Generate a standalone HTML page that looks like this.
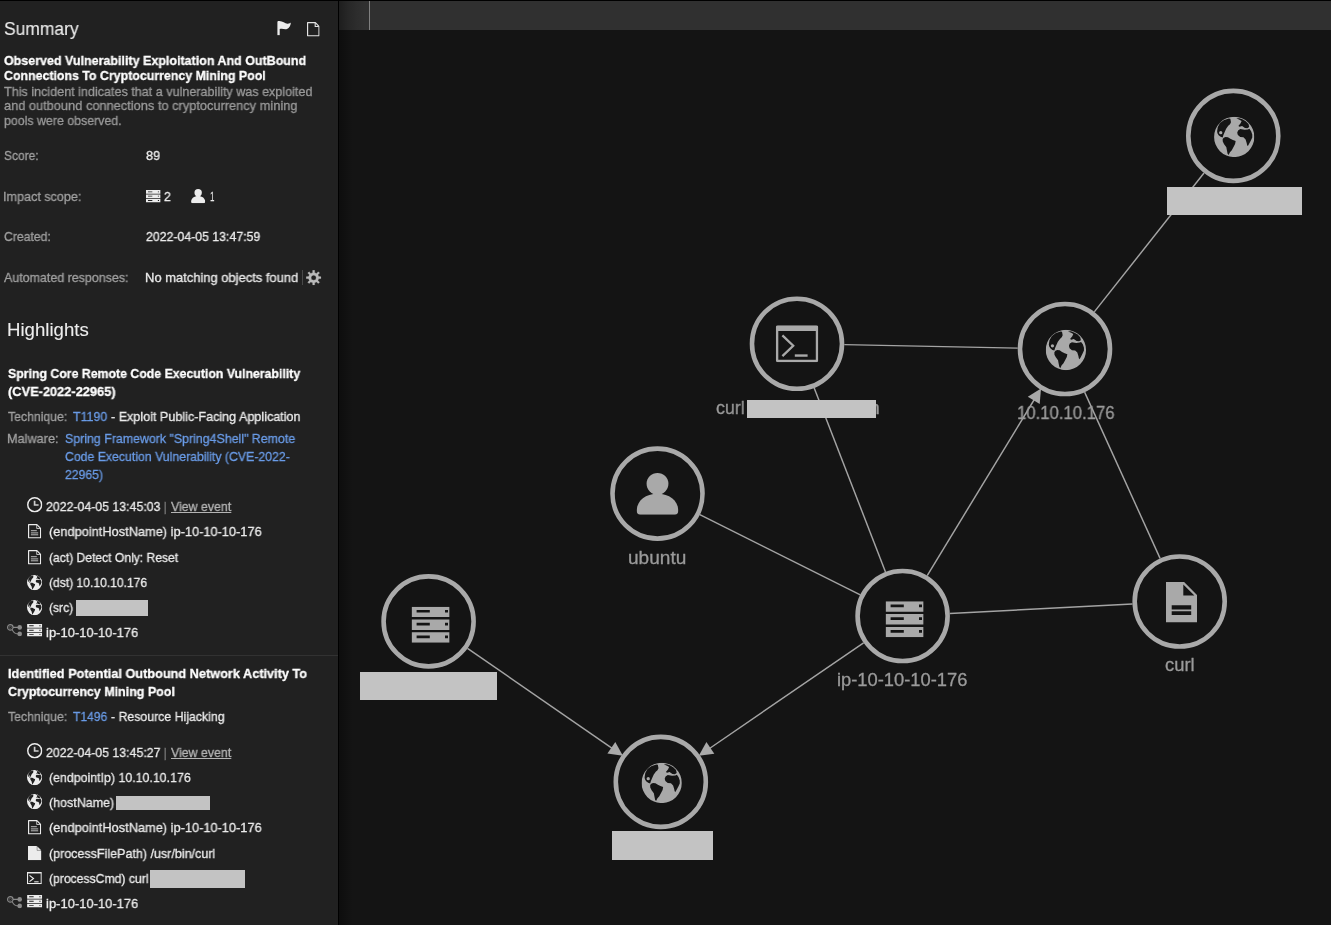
<!DOCTYPE html>
<html lang="en"><head><meta charset="utf-8"><title>Incident summary</title>
<style>
html,body{margin:0;padding:0;background:#141414;}
body{width:1331px;height:925px;position:relative;overflow:hidden;font-family:"Liberation Sans",sans-serif;}
#panel{position:absolute;left:0;top:1px;width:338px;height:924px;background:#212121;}
#edge-line{position:absolute;left:338px;top:0;width:1px;height:925px;background:#000;}
#top-line{position:absolute;left:0;top:0;width:1331px;height:1px;background:#000;}
#topbar{position:absolute;left:339px;top:1px;width:992px;height:29px;background:#303030;}
#topbar-shade{position:absolute;left:339px;top:1px;width:26px;height:29px;background:linear-gradient(90deg,rgba(18,18,18,.62),rgba(18,18,18,.3) 35%,rgba(18,18,18,.1) 70%,rgba(18,18,18,0));}
#tb-sep{position:absolute;left:369px;top:1px;width:1px;height:29px;background:#808080;}
#graph-shade{position:absolute;left:339px;top:30px;width:14px;height:895px;background:linear-gradient(90deg,rgba(0,0,0,.35),rgba(0,0,0,0));}
#hl-sep{position:absolute;left:0;top:655px;width:338px;height:1px;background:#323232;}
#resp-sep{position:absolute;left:302px;top:270px;width:1px;height:15px;background:#484848;}
.t{position:absolute;white-space:nowrap;line-height:1;transform-origin:0 0;display:block;will-change:transform;-webkit-text-stroke:0.3px currentColor;}
.ic{position:absolute;overflow:visible;}
.rd{position:absolute;background:#c3c3c3;}
#g{position:absolute;left:0;top:0;color:#a9a9a9;}
#g line{stroke:#a4a4a4;stroke-width:1.45;}
#g .ar{fill:#a9a9a9;}
#g .nd{fill:#141414;stroke:#a9a9a9;stroke-width:4.6;}
</style></head><body>
<svg width="0" height="0" style="position:absolute"><defs><symbol id="i-globe" viewBox="0 0 100 100"><path fill="currentColor" fill-rule="evenodd" stroke="none" d="M0.00 50.00 A50 50 0 1 0 100.00 50.00 A50 50 0 1 0 0.00 50.00 Z M7.6 36.2 L9.3 25.7 L14.8 15.8 L24.0 8.4 L36.5 4.2 L40.4 5.0 L42.0 13.7 L39.6 18.5 L35.2 22.5 L30.0 29.7 L26.4 37.8 L23.2 45.0 L21.4 51.3 L16.4 49.8 L11.4 45.6 L8.4 41.0 Z M21.4 55.5 L24.0 52.0 L28.5 50.2 L34.5 50.8 L40.5 54.7 L46.9 57.9 L53.6 60.3 L52.2 67.5 L48.0 75.6 L44.0 83.0 L39.5 88.0 L36.0 95.0 L33.6 91.6 L32.0 83.6 L30.5 75.6 L25.0 68.0 L21.6 61.5 Z M55.2 4.0 L63.0 7.4 L68.4 10.6 L65.9 16.1 L60.4 22.9 L63.3 24.8 L69.5 22.7 L76.7 27.9 L82.6 28.3 L87.2 25.6 L85.6 18.2 L78.6 11.2 L70.2 6.3 L62.5 3.7 Z M57.5 39.4 L59.6 34.1 L65.0 30.7 L75.9 32.4 L83.9 31.6 L87.7 29.9 L92.0 35.7 L94.8 44.2 L94.8 51.4 L91.4 58.9 L87.7 66.0 L84.0 72.8 L82.1 70.7 L81.0 65.1 L78.3 56.3 L73.0 51.0 L65.0 50.4 L59.1 45.5 Z"/><circle cx="16.6" cy="39.6" r="4.1" fill="currentColor"/></symbol><symbol id="i-server" viewBox="0 0 38 36"><path fill="currentColor" fill-rule="evenodd" d="M0 0 H38 V10.4 H0 Z M5 3.2 H18.2 V5.9 H5 Z M33.4 3.2 H36.4 V5.9 H33.4 Z M0 12.8 H38 V23.200000000000003 H0 Z M5 16.0 H18.2 V18.700000000000003 H5 Z M33.4 16.0 H36.4 V18.700000000000003 H33.4 Z M0 25.6 H38 V36.0 H0 Z M5 28.8 H18.2 V31.5 H5 Z M33.4 28.8 H36.4 V31.5 H33.4 Z "/></symbol><symbol id="i-server-s" viewBox="0 0 15 12.6"><path fill="currentColor" fill-rule="evenodd" d="M0 0 H15 V3.7 H0 Z M2 1.3 H6.5 V2.2 H2 Z M12.2 1.3 H13.4 V2.2 H12.2 Z M0 4.45 H15 V8.15 H0 Z M2 5.75 H6.5 V6.65 H2 Z M12.2 5.75 H13.4 V6.65 H12.2 Z M0 8.9 H15 V12.600000000000001 H0 Z M2 10.200000000000001 H6.5 V11.100000000000001 H2 Z M12.2 10.200000000000001 H13.4 V11.100000000000001 H12.2 Z "/></symbol><symbol id="i-user" viewBox="0 0 42 42"><circle cx="21" cy="11" r="10.9" fill="currentColor"/><path fill="currentColor" d="M0.2 38 C0.2 28 9 21 21 21 C33 21 41.8 28 41.8 38 C41.8 40.5 40.3 42 38 42 H4 C1.7 42 0.2 40.5 0.2 38 Z"/></symbol><symbol id="i-term" viewBox="0 0 42.5 37"><path fill="currentColor" fill-rule="evenodd" d="M2 0 H40.5 Q42.5 0 42.5 2 V35 Q42.5 37 40.5 37 H2 Q0 37 0 35 V2 Q0 0 2 0 Z M2.5 5.8 H40 V34.5 H2.5 Z"/><path fill="none" stroke="currentColor" stroke-width="2.3" d="M6.6 10.2 L17.4 20.5 L6.6 30.8"/><rect x="19" y="29.1" width="12.8" height="2.4" fill="currentColor"/></symbol><symbol id="i-file2" viewBox="0 0 31 40.7"><path fill="currentColor" fill-rule="evenodd" d="M0 0 H18 L31 13 V40.7 H0 Z M17.3 2.6 V13.6 H28.4 Z M5.7 23.4 H25.2 V27.6 H5.7 Z M5.7 29.4 H25.2 V33.2 H5.7 Z"/></symbol><symbol id="i-file-solid" viewBox="0 0 13.4 14.2"><path fill="currentColor" d="M0 0 H8.6 L13.4 4.8 V14.2 H0 Z"/><path fill="currentColor" opacity="0.55" d="M9.3 0.3 L13.1 4.1 H9.3 Z"/><path fill="none" stroke="#212121" stroke-width="0.7" opacity="0.55" d="M9.1 0.2 V4.4 H13.2"/></symbol><symbol id="i-file-o" viewBox="0 0 12.6 14.4"><path fill="none" stroke="currentColor" stroke-width="1.15" stroke-linejoin="round" d="M0.6 0.6 H8.4 L12.0 4.3 V13.8 H0.6 Z"/><path fill="none" stroke="currentColor" stroke-width="1.1" d="M8.2 0.9 V4.5 H11.8"/></symbol><symbol id="i-file-l" viewBox="0 0 13.2 14.4"><path fill="none" stroke="currentColor" stroke-width="1.15" stroke-linejoin="round" d="M0.6 0.6 H8.9 L12.6 4.3 V13.8 H0.6 Z"/><path fill="none" stroke="currentColor" stroke-width="1" d="M8.7 0.9 V4.5 H12.3" opacity="0.75"/><path fill="none" stroke="currentColor" stroke-width="0.85" d="M2.9 6.7 H8.8 M2.9 8.9 H10.2 M2.9 10.8 H10.2" opacity="0.9"/></symbol><symbol id="i-flag" viewBox="0 0 14 14.4"><path fill="currentColor" d="M0.4 0.9 C0.4 0.4 0.8 0.15 1.4 0.1 C5.2 -0.5 7.8 2.5 10.4 2.7 C12.1 2.8 13.1 2.2 13.9 1.5 C13.6 4.6 12.4 7.2 10 8 C7.6 8.7 5.6 7.3 2.7 8.1 V14.3 H0.4 Z"/></symbol><symbol id="i-gear" viewBox="0 0 100 100"><path fill="currentColor" fill-rule="evenodd" stroke="currentColor" stroke-width="2.2" stroke-linejoin="round" d="M43.3 17.2 L44.0 1.4 L56.0 1.4 L56.7 17.2 L68.5 22.1 L80.2 11.4 L88.6 19.8 L77.9 31.5 L82.8 43.3 L98.6 44.0 L98.6 56.0 L82.8 56.7 L77.9 68.5 L88.6 80.2 L80.2 88.6 L68.5 77.9 L56.7 82.8 L56.0 98.6 L44.0 98.6 L43.3 82.8 L31.5 77.9 L19.8 88.6 L11.4 80.2 L22.1 68.5 L17.2 56.7 L1.4 56.0 L1.4 44.0 L17.2 43.3 L22.1 31.5 L11.4 19.8 L19.8 11.4 L31.5 22.1 Z M33.50 50.00 A16.5 16.5 0 1 0 66.50 50.00 A16.5 16.5 0 1 0 33.50 50.00 Z"/></symbol><symbol id="i-clock" viewBox="0 0 15.4 15.4"><circle cx="7.7" cy="7.7" r="6.95" fill="none" stroke="currentColor" stroke-width="1.45"/><path fill="none" stroke="currentColor" stroke-width="1.7" d="M7.6 3.8 V8 H11.6" opacity="0.85"/></symbol><symbol id="i-net" viewBox="0 0 15.4 12.4"><circle cx="3.3" cy="3.4" r="2.75" fill="none" stroke="currentColor" stroke-width="1.1"/><circle cx="3.3" cy="3.4" r="1.2" fill="none" stroke="currentColor" stroke-width="0.6" opacity="0.7"/><path fill="none" stroke="currentColor" stroke-width="1.1" d="M6 3.4 H11 M5.2 5.6 C6.5 8.6 8.5 9.9 11 9.9"/><circle cx="12.7" cy="3.4" r="2.3" fill="currentColor"/><circle cx="12.7" cy="9.9" r="2.3" fill="currentColor"/></symbol><symbol id="i-term-s" viewBox="0 0 14.8 12.3"><rect x="0.55" y="0.55" width="13.7" height="11.0" fill="none" stroke="currentColor" stroke-width="1.1"/><rect x="0.55" y="0.3" width="13.7" height="1.1" fill="currentColor"/><rect x="0.3" y="11.2" width="14.2" height="0.9" fill="currentColor" opacity="0.55"/><path fill="none" stroke="currentColor" stroke-width="1.15" d="M2.5 3.4 L6.5 6.5 L2.5 9.6"/><rect x="7.2" y="9.0" width="4.4" height="1.5" fill="currentColor" opacity="0.7"/></symbol></defs></svg>
<div id="topbar"></div><div id="topbar-shade"></div><div id="tb-sep"></div><div id="graph-shade"></div>
<svg id="g" width="1331" height="925" viewBox="0 0 1331 925">
<line x1="1204.0" y1="173.0" x2="1094.3" y2="311.9"/>
<line x1="844.3" y1="344.6" x2="1017.7" y2="348.1"/>
<line x1="814.1" y1="387.8" x2="885.5" y2="571.9"/>
<line x1="699.8" y1="514.7" x2="860.3" y2="594.9"/>
<line x1="927.2" y1="575.6" x2="1034.3" y2="399.5"/>
<polygon class="ar" points="1041.0,388.4 1039.7,404.0 1027.8,396.7"/>
<line x1="1084.6" y1="392.1" x2="1160.1" y2="558.4"/>
<line x1="949.8" y1="613.5" x2="1132.5" y2="604.0"/>
<line x1="467.5" y1="648.3" x2="612.2" y2="748.3"/>
<polygon class="ar" points="622.9,755.7 607.4,753.5 615.3,742.0"/>
<line x1="863.6" y1="642.8" x2="709.5" y2="748.5"/>
<polygon class="ar" points="698.8,755.8 706.4,742.1 714.3,753.7"/>
<circle class="nd" cx="1233.3" cy="135.9" r="45.0"/>
<use href="#i-globe" x="1214.05" y="116.75" width="40.3" height="40.3"/>
<circle class="nd" cx="797.0" cy="343.7" r="45.0"/>
<use href="#i-term" x="775.80" y="325.25" width="42.5" height="37"/>
<circle class="nd" cx="1065.0" cy="349.0" r="45.0"/>
<use href="#i-globe" x="1045.75" y="329.85" width="40.3" height="40.3"/>
<circle class="nd" cx="657.5" cy="493.6" r="45.0"/>
<use href="#i-user" x="636.50" y="472.80" width="42" height="42"/>
<circle class="nd" cx="428.6" cy="621.4" r="45.0"/>
<use href="#i-server" x="411.60" y="606.70" width="38" height="36"/>
<circle class="nd" cx="902.6" cy="616.0" r="45.0"/>
<use href="#i-server" x="885.60" y="601.30" width="38" height="36"/>
<circle class="nd" cx="1179.7" cy="601.5" r="45.0"/>
<use href="#i-file2" x="1166.00" y="581.90" width="31" height="40.7"/>
<circle class="nd" cx="660.8" cy="781.9" r="45.0"/>
<use href="#i-globe" x="641.55" y="762.75" width="40.3" height="40.3"/>
</svg>
<span class="t" style="left:715.60px;top:399.00px;font-size:18px;color:#9a9a9a;transform:scaleX(0.9891)">curl</span>
<span class="t" style="left:868.92px;top:399.00px;font-size:18px;color:#9a9a9a;transform:scaleX(1.0750)">n</span>
<span class="t" style="left:1016.67px;top:404.00px;font-size:18px;color:#9a9a9a;transform:scaleX(0.9290)">10.10.10.176</span>
<span class="t" style="left:627.94px;top:548.60px;font-size:18px;color:#9a9a9a;transform:scaleX(1.0595)">ubuntu</span>
<span class="t" style="left:836.98px;top:671.20px;font-size:18px;color:#9a9a9a;transform:scaleX(1.0183)">ip-10-10-10-176</span>
<span class="t" style="left:1165.20px;top:656.00px;font-size:18px;color:#9a9a9a;transform:scaleX(1.0213)">curl</span>
<div class="rd" style="left:1167.0px;top:186.9px;width:135.0px;height:28.1px"></div>
<div class="rd" style="left:746.9px;top:399.7px;width:129.3px;height:18.2px"></div>
<div class="rd" style="left:360.0px;top:672.0px;width:137.0px;height:28.0px"></div>
<div class="rd" style="left:612.0px;top:831.0px;width:101.0px;height:28.8px"></div>
<div id="panel"></div><div id="edge-line"></div><div id="top-line"></div>
<div id="hl-sep"></div><div id="resp-sep"></div>
<span class="t" style="left:3.80px;top:19.80px;font-size:18px;color:#ededed;-webkit-text-stroke:0.1px currentColor;transform:scaleX(0.9687)">Summary</span>
<span class="t" style="left:3.80px;top:53.90px;font-size:13px;color:#ffffff;font-weight:700;transform:scaleX(0.9603)">Observed Vulnerability Exploitation And OutBound</span>
<span class="t" style="left:3.80px;top:68.50px;font-size:13px;color:#ffffff;font-weight:700;transform:scaleX(0.9518)">Connections To Cryptocurrency Mining Pool</span>
<span class="t" style="left:3.80px;top:85.00px;font-size:13px;color:#9b9b9b;transform:scaleX(0.9678)">This incident indicates that a vulnerability was exploited</span>
<span class="t" style="left:3.80px;top:99.40px;font-size:13px;color:#9b9b9b;transform:scaleX(0.9855)">and outbound connections to cryptocurrency mining</span>
<span class="t" style="left:3.80px;top:113.70px;font-size:13px;color:#9b9b9b;transform:scaleX(0.9515)">pools were observed.</span>
<span class="t" style="left:3.80px;top:148.80px;font-size:13px;color:#a0a0a0;transform:scaleX(0.9199)">Score:</span>
<span class="t" style="left:146.10px;top:148.80px;font-size:13px;color:#ececec;transform:scaleX(0.9768)">89</span>
<span class="t" style="left:2.83px;top:189.90px;font-size:13px;color:#a0a0a0;transform:scaleX(0.9696)">Impact scope:</span>
<span class="t" style="left:164.20px;top:189.90px;font-size:13px;color:#ececec;transform:scaleX(0.9429)">2</span>
<span class="t" style="left:210.00px;top:189.90px;font-size:13px;color:#ececec;transform:scaleX(0.6143)">1</span>
<span class="t" style="left:3.80px;top:229.70px;font-size:13px;color:#a0a0a0;transform:scaleX(0.9381)">Created:</span>
<span class="t" style="left:146.00px;top:229.70px;font-size:13px;color:#ececec;transform:scaleX(0.9462)">2022-04-05 13:47:59</span>
<span class="t" style="left:3.80px;top:270.90px;font-size:13px;color:#a0a0a0;transform:scaleX(0.9570)">Automated responses:</span>
<span class="t" style="left:145.00px;top:270.90px;font-size:13px;color:#ececec;transform:scaleX(0.9955)">No matching objects found</span>
<span class="t" style="left:6.67px;top:320.70px;font-size:18px;color:#ededed;-webkit-text-stroke:0.1px currentColor;transform:scaleX(1.0341)">Highlights</span>
<span class="t" style="left:7.70px;top:366.80px;font-size:13px;color:#ffffff;font-weight:700;transform:scaleX(0.9465)">Spring Core Remote Code Execution Vulnerability</span>
<span class="t" style="left:7.70px;top:384.70px;font-size:13px;color:#ffffff;font-weight:700;transform:scaleX(0.9863)">(CVE-2022-22965)</span>
<span class="t" style="left:7.70px;top:409.70px;font-size:13px;color:#a0a0a0;transform:scaleX(0.9427)">Technique:</span>
<span class="t" style="left:73.30px;top:409.70px;font-size:13px;color:#6a9ce8;transform:scaleX(0.9505)">T1190</span>
<span class="t" style="left:110.90px;top:409.70px;font-size:13px;color:#ececec;transform:scaleX(0.9679)">- Exploit Public-Facing Application</span>
<span class="t" style="left:6.72px;top:431.90px;font-size:13px;color:#a0a0a0;transform:scaleX(0.9780)">Malware:</span>
<span class="t" style="left:64.60px;top:431.90px;font-size:13px;color:#6a9ce8;transform:scaleX(0.9514)">Spring Framework "Spring4Shell" Remote</span>
<span class="t" style="left:64.60px;top:449.80px;font-size:13px;color:#6a9ce8;transform:scaleX(0.9443)">Code Execution Vulnerability (CVE-2022-</span>
<span class="t" style="left:64.60px;top:467.70px;font-size:13px;color:#6a9ce8;transform:scaleX(0.9365)">22965)</span>
<span class="t" style="left:46.00px;top:500.00px;font-size:13px;color:#ececec;transform:scaleX(0.9478)">2022-04-05 13:45:03</span>
<span class="t" style="left:163.80px;top:500.00px;font-size:13px;color:#b0b0b0;transform:scaleX(0.6000)">|</span>
<span class="t" style="left:170.60px;top:500.00px;font-size:13px;color:#b4b4b4;text-decoration:underline;transform:scaleX(0.9507)">View event</span>
<span class="t" style="left:48.50px;top:525.00px;font-size:13px;color:#ececec;transform:scaleX(0.9846)">(endpointHostName) ip-10-10-10-176</span>
<span class="t" style="left:48.50px;top:551.00px;font-size:13px;color:#ececec;transform:scaleX(0.9310)">(act) Detect Only: Reset</span>
<span class="t" style="left:48.50px;top:576.00px;font-size:13px;color:#ececec;transform:scaleX(0.9298)">(dst) 10.10.10.176</span>
<span class="t" style="left:48.50px;top:601.00px;font-size:13px;color:#ececec;transform:scaleX(0.9276)">(src)</span>
<span class="t" style="left:46.00px;top:625.90px;font-size:13px;color:#ececec;transform:scaleX(0.9970)">ip-10-10-10-176</span>
<span class="t" style="left:7.70px;top:666.60px;font-size:13px;color:#ffffff;font-weight:700;transform:scaleX(0.9790)">Identified Potential Outbound Network Activity To</span>
<span class="t" style="left:7.70px;top:684.70px;font-size:13px;color:#ffffff;font-weight:700;transform:scaleX(0.9587)">Cryptocurrency Mining Pool</span>
<span class="t" style="left:7.70px;top:709.70px;font-size:13px;color:#a0a0a0;transform:scaleX(0.9427)">Technique:</span>
<span class="t" style="left:73.30px;top:709.70px;font-size:13px;color:#6a9ce8;transform:scaleX(0.9254)">T1496</span>
<span class="t" style="left:110.90px;top:709.70px;font-size:13px;color:#ececec;transform:scaleX(0.9473)">- Resource Hijacking</span>
<span class="t" style="left:46.00px;top:745.80px;font-size:13px;color:#ececec;transform:scaleX(0.9478)">2022-04-05 13:45:27</span>
<span class="t" style="left:163.80px;top:745.80px;font-size:13px;color:#b0b0b0;transform:scaleX(0.6000)">|</span>
<span class="t" style="left:170.60px;top:745.80px;font-size:13px;color:#b4b4b4;text-decoration:underline;transform:scaleX(0.9507)">View event</span>
<span class="t" style="left:48.50px;top:770.80px;font-size:13px;color:#ececec;transform:scaleX(0.9518)">(endpointIp) 10.10.10.176</span>
<span class="t" style="left:48.50px;top:795.70px;font-size:13px;color:#ececec;transform:scaleX(0.9604)">(hostName)</span>
<span class="t" style="left:48.50px;top:820.70px;font-size:13px;color:#ececec;transform:scaleX(0.9846)">(endpointHostName) ip-10-10-10-176</span>
<span class="t" style="left:48.50px;top:846.80px;font-size:13px;color:#ececec;transform:scaleX(0.9625)">(processFilePath) /usr/bin/curl</span>
<span class="t" style="left:48.50px;top:871.80px;font-size:13px;color:#ececec;transform:scaleX(0.9370)">(processCmd) curl</span>
<span class="t" style="left:46.00px;top:896.60px;font-size:13px;color:#ececec;transform:scaleX(0.9970)">ip-10-10-10-176</span>
<svg class="ic" style="left:277.4px;top:20.8px;color:#ececec;" width="14" height="14.4"><use href="#i-flag" width="14" height="14.4"/></svg>
<svg class="ic" style="left:306.8px;top:21.8px;color:#e4e4e4;" width="12.6" height="14.4"><use href="#i-file-o" width="12.6" height="14.4"/></svg>
<svg class="ic" style="left:145.7px;top:189.7px;color:#ececec;" width="14.6" height="12.5"><use href="#i-server-s" width="14.6" height="12.5"/></svg>
<svg class="ic" style="left:190.8px;top:189.0px;color:#ececec;" width="14.3" height="14.2"><use href="#i-user" width="14.3" height="14.2"/></svg>
<svg class="ic" style="left:305.9px;top:270.0px;color:#bababa;" width="15.3" height="15.3"><use href="#i-gear" width="15.3" height="15.3"/></svg>
<svg class="ic" style="left:26.8px;top:497.0px;color:#ececec;" width="15.4" height="15.4"><use href="#i-clock" width="15.4" height="15.4"/></svg>
<svg class="ic" style="left:27.9px;top:523.7px;color:#ececec;" width="13.2" height="14.4"><use href="#i-file-l" width="13.2" height="14.4"/></svg>
<svg class="ic" style="left:27.9px;top:549.7px;color:#ececec;" width="13.2" height="14.4"><use href="#i-file-l" width="13.2" height="14.4"/></svg>
<svg class="ic" style="left:26.9px;top:574.7px;color:#ececec;" width="15.2" height="15.2"><use href="#i-globe" width="15.2" height="15.2"/></svg>
<svg class="ic" style="left:26.9px;top:599.5px;color:#ececec;" width="15.2" height="15.2"><use href="#i-globe" width="15.2" height="15.2"/></svg>
<svg class="ic" style="left:7.2px;top:624.2px;color:#8a8a8a;" width="15.4" height="12.4"><use href="#i-net" width="15.4" height="12.4"/></svg>
<svg class="ic" style="left:26.9px;top:623.9px;color:#ececec;" width="15.3" height="12.6"><use href="#i-server-s" width="15.3" height="12.6"/></svg>
<svg class="ic" style="left:26.8px;top:742.6px;color:#ececec;" width="15.4" height="15.4"><use href="#i-clock" width="15.4" height="15.4"/></svg>
<svg class="ic" style="left:26.9px;top:769.5px;color:#ececec;" width="15.2" height="15.2"><use href="#i-globe" width="15.2" height="15.2"/></svg>
<svg class="ic" style="left:26.9px;top:794.4px;color:#ececec;" width="15.2" height="15.2"><use href="#i-globe" width="15.2" height="15.2"/></svg>
<svg class="ic" style="left:27.9px;top:819.5px;color:#ececec;" width="13.2" height="14.4"><use href="#i-file-l" width="13.2" height="14.4"/></svg>
<svg class="ic" style="left:27.7px;top:845.7px;color:#ececec;" width="13.4" height="14.2"><use href="#i-file-solid" width="13.4" height="14.2"/></svg>
<svg class="ic" style="left:27.0px;top:872.0px;color:#ececec;" width="14.8" height="12.3"><use href="#i-term-s" width="14.8" height="12.3"/></svg>
<svg class="ic" style="left:7.2px;top:895.6px;color:#8a8a8a;" width="15.4" height="12.4"><use href="#i-net" width="15.4" height="12.4"/></svg>
<svg class="ic" style="left:26.9px;top:894.6px;color:#ececec;" width="15.3" height="12.6"><use href="#i-server-s" width="15.3" height="12.6"/></svg>
<div class="rd" style="left:76.1px;top:600.0px;width:71.8px;height:16.0px"></div>
<div class="rd" style="left:116.2px;top:796.0px;width:93.8px;height:13.8px"></div>
<div class="rd" style="left:150.0px;top:870.3px;width:95.0px;height:17.4px"></div>
</body></html>
